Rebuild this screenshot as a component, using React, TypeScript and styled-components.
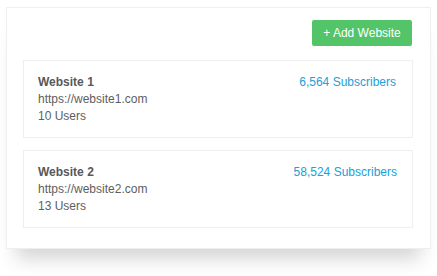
import React from "react";
import styled, { createGlobalStyle } from "styled-components";

const Global = createGlobalStyle`
  html, body { margin: 0; padding: 0; background: #fff; height: 100%; }
  #root { min-height: 276px; }
  body { font-family: "Liberation Sans", Arial, sans-serif; font-size: 12px; }
`;

const Page = styled.div`
  padding: 7px 6px 28px 6px;
`;

const Panel = styled.div`
  width: 425px;
  box-sizing: border-box;
  border: 1px solid #efefef;
  background: #fff;
  padding: 12px 17px 20px 16px;
  box-shadow: 0 20px 18px -10px rgba(0, 0, 0, 0.17);
  display: flex;
  flex-direction: column;
`;

const Toolbar = styled.div`
  display: flex;
  justify-content: flex-end;
  margin-bottom: 14px;
  padding-right: 1px;
`;

const AddButton = styled.button`
  font-family: inherit;
  font-size: 12px;
  line-height: 17px;
  color: #fff;
  background: #54c468;
  border: none;
  border-radius: 2px;
  width: 100px;
  height: 26px;
  padding: 0;
  cursor: pointer;
`;

const List = styled.div`
  display: flex;
  flex-direction: column;
  gap: 12px;
`;

const Card = styled.div`
  border: 1px solid #eeeeee;
  padding: 13px 16px 12px 14px;
  display: flex;
  justify-content: space-between;
  align-items: flex-start;
  line-height: 17px;
  color: #5e5e5e;
`;

const Info = styled.div`
  display: flex;
  flex-direction: column;
`;

const Name = styled.div`
  font-weight: bold;
  color: #585858;
`;

const Line = styled.div``;

const Subs = styled.div<{ $shift: number }>`
  color: #20a0d8;
  margin-right: ${(p) => p.$shift}px;
`;

const sites = [
  { name: "Website 1", url: "https://website1.com", users: 10, subs: "6,564", shift: 0 },
  { name: "Website 2", url: "https://website2.com", users: 13, subs: "58,524", shift: -1 },
];

export default function App() {
  return (
    <>
      <Global />
      <Page>
        <Panel>
          <Toolbar>
            <AddButton>+ Add Website</AddButton>
          </Toolbar>
          <List>
            {sites.map((s) => (
              <Card key={s.name}>
                <Info>
                  <Name>{s.name}</Name>
                  <Line>{s.url}</Line>
                  <Line>{s.users} Users</Line>
                </Info>
                <Subs $shift={s.shift}>{s.subs} Subscribers</Subs>
              </Card>
            ))}
          </List>
        </Panel>
      </Page>
    </>
  );
}
